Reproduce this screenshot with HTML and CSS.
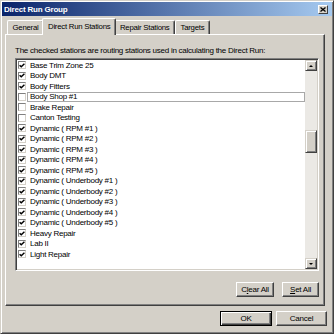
FILE: index.html
```html
<!DOCTYPE html>
<html>
<head>
    <title>Direct Run Group</title>
    <link rel="stylesheet" href="styles.css">
</head>
<body>
    <div class="window">
        <div class="titlebar">
            <span>Direct Run Group</span>
            <span class="close">
                <svg width="6" height="5" viewBox="0 0 6 5"><path d="M0.5 0.5 L5.5 4.5 M5.5 0.5 L0.5 4.5" stroke="#000" stroke-width="1.3"/></svg>
            </span>
        </div>

        <div class="client">
            <div class="tabs">
                <div class="tab">General</div>
                <div class="tab active">Direct Run Stations</div>
                <div class="tab">Repair Stations</div>
                <div class="tab">Targets</div>
            </div>

            <div class="panel">
                <p class="hint">The checked stations are routing stations used in calculating the Direct Run:</p>

                <div class="listbox">
                    <ul class="items">
                        <li class="item"><span class="box on"><svg viewBox="0 0 7 6"><path d="M0.6 2.6 L2.6 4.6 L6.4 0.8" /></svg></span><span class="name">Base Trim Zone 25</span></li>
                        <li class="item"><span class="box on"><svg viewBox="0 0 7 6"><path d="M0.6 2.6 L2.6 4.6 L6.4 0.8" /></svg></span><span class="name">Body DMT</span></li>
                        <li class="item"><span class="box on"><svg viewBox="0 0 7 6"><path d="M0.6 2.6 L2.6 4.6 L6.4 0.8" /></svg></span><span class="name">Body Fitters</span></li>
                        <li class="item focus"><span class="box"></span><span class="name">Body Shop #1</span></li>
                        <li class="item"><span class="box"></span><span class="name">Brake Repair</span></li>
                        <li class="item"><span class="box"></span><span class="name">Canton Testing</span></li>
                        <li class="item"><span class="box on"><svg viewBox="0 0 7 6"><path d="M0.6 2.6 L2.6 4.6 L6.4 0.8" /></svg></span><span class="name">Dynamic ( RPM #1 )</span></li>
                        <li class="item"><span class="box on"><svg viewBox="0 0 7 6"><path d="M0.6 2.6 L2.6 4.6 L6.4 0.8" /></svg></span><span class="name">Dynamic ( RPM #2 )</span></li>
                        <li class="item"><span class="box on"><svg viewBox="0 0 7 6"><path d="M0.6 2.6 L2.6 4.6 L6.4 0.8" /></svg></span><span class="name">Dynamic ( RPM #3 )</span></li>
                        <li class="item"><span class="box on"><svg viewBox="0 0 7 6"><path d="M0.6 2.6 L2.6 4.6 L6.4 0.8" /></svg></span><span class="name">Dynamic ( RPM #4 )</span></li>
                        <li class="item"><span class="box on"><svg viewBox="0 0 7 6"><path d="M0.6 2.6 L2.6 4.6 L6.4 0.8" /></svg></span><span class="name">Dynamic ( RPM #5 )</span></li>
                        <li class="item"><span class="box on"><svg viewBox="0 0 7 6"><path d="M0.6 2.6 L2.6 4.6 L6.4 0.8" /></svg></span><span class="name">Dynamic ( Underbody #1 )</span></li>
                        <li class="item"><span class="box on"><svg viewBox="0 0 7 6"><path d="M0.6 2.6 L2.6 4.6 L6.4 0.8" /></svg></span><span class="name">Dynamic ( Underbody #2 )</span></li>
                        <li class="item"><span class="box on"><svg viewBox="0 0 7 6"><path d="M0.6 2.6 L2.6 4.6 L6.4 0.8" /></svg></span><span class="name">Dynamic ( Underbody #3 )</span></li>
                        <li class="item"><span class="box on"><svg viewBox="0 0 7 6"><path d="M0.6 2.6 L2.6 4.6 L6.4 0.8" /></svg></span><span class="name">Dynamic ( Underbody #4 )</span></li>
                        <li class="item"><span class="box on"><svg viewBox="0 0 7 6"><path d="M0.6 2.6 L2.6 4.6 L6.4 0.8" /></svg></span><span class="name">Dynamic ( Underbody #5 )</span></li>
                        <li class="item"><span class="box on"><svg viewBox="0 0 7 6"><path d="M0.6 2.6 L2.6 4.6 L6.4 0.8" /></svg></span><span class="name">Heavy Repair</span></li>
                        <li class="item"><span class="box on"><svg viewBox="0 0 7 6"><path d="M0.6 2.6 L2.6 4.6 L6.4 0.8" /></svg></span><span class="name">Lab II</span></li>
                        <li class="item"><span class="box on"><svg viewBox="0 0 7 6"><path d="M0.6 2.6 L2.6 4.6 L6.4 0.8" /></svg></span><span class="name">Light Repair</span></li>
                    </ul>
                    <div class="scrollbar">
                        <div class="sb-btn"><span class="arrow up"></span></div>
                        <div class="sb-btn thumb"></div>
                        <div class="sb-btn down"><span class="arrow"></span></div>
                    </div>
                </div>

                <div class="panel-buttons">
                    <button class="btn clear">C<u>l</u>ear All</button>
                    <button class="btn set"><u>S</u>et All</button>
                </div>
            </div>

            <div class="dialog-buttons">
                <button class="btn default">OK</button>
                <button class="btn">Cancel</button>
            </div>
        </div>
    </div>
</body>
</html>
```

FILE: styles.css
```css
* {
    box-sizing: border-box;
}
body {
    margin: 0;
    background-color: #d4d0c8;
    font-family: "Liberation Sans", Arial, sans-serif;
    font-size: 8px;
    letter-spacing: -0.25px;
    color: #000;
}
.window {
    width: 334px;
    height: 334px;
    padding: 1px;
    border: 1px solid;
    border-color: #d4d0c8 #404040 #404040 #d4d0c8;
    box-shadow: inset 1px 1px #fff, inset -1px -1px #808080;
    display: flex;
    flex-direction: column;
}
.titlebar {
    height: 14px;
    padding: 0 4px 0 2px;
    background: linear-gradient(to right, #0a246a, #a6caf0);
    color: #fff;
    font-weight: bold;
    font-size: 8px;
    letter-spacing: -0.2px;
    display: flex;
    align-items: center;
    justify-content: space-between;
}
.close {
    width: 10px;
    height: 9px;
    background-color: #d4d0c8;
    border: 1px solid;
    border-color: #fff #404040 #404040 #fff;
    display: flex;
    align-items: center;
    justify-content: center;
}
.close svg {
    display: block;
}
.client {
    flex: 1;
    padding: 2px 5px 6px 3px;
    display: flex;
    flex-direction: column;
}
.tabs {
    height: 16px;
    padding-left: 2px;
    font-size: 7.8px;
    display: flex;
    align-items: flex-end;
}
.tab {
    height: 14px;
    padding: 0 4.5px;
    border: 1px solid;
    border-bottom: 0;
    border-color: #fff #404040 #404040 #fff;
    box-shadow: inset -1px 0 #808080;
    border-radius: 2px 2px 0 0;
    display: flex;
    align-items: center;
    white-space: nowrap;
}
.tab.active {
    height: 17px;
    margin: 0 -2px -1px;
    padding: 0 5px 1px;
    position: relative;
    background-color: #d4d0c8;
}
.panel {
    height: 272px;
    margin-right: 2px;
    padding: 12px 5px 8px 9px;
    border: 1px solid;
    border-color: #fff #404040 #404040 #fff;
    box-shadow: inset -1px -1px #808080;
    display: flex;
    flex-direction: column;
}
.hint {
    margin: 0 0 3px;
    line-height: 8px;
    white-space: nowrap;
}
.listbox {
    height: 213px;
    padding: 1px;
    background: #fff;
    border: 1px solid;
    border-color: #808080 #fff #fff #808080;
    box-shadow: inset 1px 1px #404040, inset -1px -1px #d4d0c8;
    display: flex;
}
.items {
    flex: 1;
    list-style: none;
    margin: 0;
    padding: 0;
    overflow: hidden;
}
.item {
    height: 10.5px;
    display: flex;
    align-items: center;
    white-space: nowrap;
}
.box {
    width: 8px;
    height: 8px;
    margin-left: 1px;
    flex-shrink: 0;
    background: #fff;
    border: 1px solid;
    border-color: #808080 #d4d0c8 #d4d0c8 #808080;
    display: flex;
    align-items: center;
    justify-content: center;
}
.box svg {
    width: 6px;
    height: 5px;
    display: block;
}
.box path {
    fill: none;
    stroke: #000;
    stroke-width: 1.7;
}
.name {
    flex: 1;
    height: 10px;
    margin-left: 1px;
    padding-left: 2px;
    border: 1px solid transparent;
    display: flex;
    align-items: center;
}
.item.focus .name {
    border-color: #a8a8a8;
}
.scrollbar {
    width: 12px;
    background-color: #ebe9e5;
    display: flex;
    flex-direction: column;
}
.sb-btn {
    height: 11px;
    background-color: #d4d0c8;
    border: 1px solid;
    border-color: #d4d0c8 #404040 #404040 #d4d0c8;
    box-shadow: inset 1px 1px #fff, inset -1px -1px #808080;
    display: flex;
    align-items: center;
    justify-content: center;
}
.sb-btn.thumb {
    height: 23px;
    margin-top: 59px;
}
.sb-btn.down {
    margin-top: auto;
}
.arrow {
    width: 0;
    height: 0;
    border-left: 2px solid transparent;
    border-right: 2px solid transparent;
    border-top: 2px solid #000;
}
.arrow.up {
    border-top: 0;
    border-bottom: 2px solid #000;
}
.btn {
    height: 15px;
    padding: 0;
    font: inherit;
    letter-spacing: inherit;
    color: #000;
    background-color: #d4d0c8;
    border: 1px solid;
    border-color: #fff #404040 #404040 #fff;
    box-shadow: inset -1px -1px #808080;
}
.panel-buttons {
    margin-top: 11px;
    display: flex;
    justify-content: flex-end;
    gap: 8px;
}
.btn.clear {
    width: 38px;
}
.btn.set {
    width: 37px;
}
.dialog-buttons {
    margin-top: 5px;
    display: flex;
    justify-content: flex-end;
    gap: 4px;
}
.dialog-buttons .btn {
    width: 51px;
}
.btn.default {
    width: 52px;
    border-color: #000;
    box-shadow: inset 1px 1px #fff, inset -1px -1px #404040, inset -2px -2px #808080;
}
```
